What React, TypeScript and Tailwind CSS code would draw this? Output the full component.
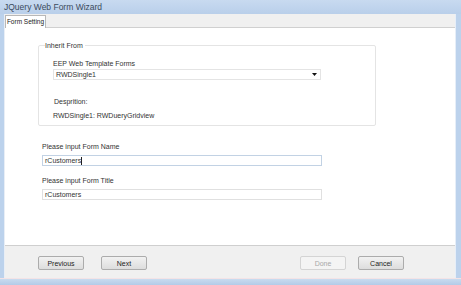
import React from "react";

const font = { fontFamily: '"Liberation Sans", Arial, sans-serif' };

function WinButton({ label, disabled }: { label: string; disabled?: boolean }) {
    return (
        <button
            className={`w-[46px] h-[14px] rounded-[2px] border text-[7px] leading-none flex items-center justify-center ${
                disabled
                    ? "border-[#d4d4d4] bg-[#f4f4f4] text-[#a8a8a8]"
                    : "border-[#acacac] bg-gradient-to-b from-[#f2f2f2] to-[#dddddd] text-[#222]"
            }`}
        >
            {label}
        </button>
    );
}

export default function App() {
    return (
        <div className="w-[461px] h-[285px] flex flex-col bg-[#c4d7ee] overflow-hidden" style={font}>
            {/* title bar */}
            <div className="h-[14px] flex items-center pl-[4px] bg-gradient-to-b from-[#c8daf0] to-[#b9cfea] text-[8.5px] text-[#3b4a5c]">
                JQuery Web Form Wizard
            </div>

            <div className="flex flex-1">
                <div className="w-[4px] bg-[#bcd2ec]" />
                <div className="flex-1 flex flex-col bg-[#f0f0f0] border-l border-[#e8eef6]">
                    {/* tab strip */}
                    <div className="h-[14px] flex items-end border-b border-[#d0d0d0]">
                        <div className="h-[13px] w-[41px] bg-white border border-b-0 border-[#b8b8b8] text-[6.5px] whitespace-nowrap text-[#222] flex items-center justify-center -mb-px">
                            Form Setting
                        </div>
                    </div>

                    {/* content */}
                    <div className="h-[218px] bg-white border-b border-[#cfcfcf] text-[7px] text-[#333] pl-[33px] pt-[17px]">
                        <div className="relative w-[338px] h-[81px] border border-[#e4e4e4] rounded-[2px]">
                            <span className="absolute -top-[5px] left-[6px] bg-white pr-[2px] leading-[9px]">Inherit From</span>
                            <div className="pl-[14px] pt-[13px]">
                                <div className="leading-[9px]">EEP Web Template Forms</div>
                                <div className="mt-[1px] w-[268px] h-[11px] border border-[#e4e4e4] flex items-center justify-between pl-[2px] pr-[3px]">
                                    <span className="leading-none">RWDSingle1</span>
                                    <svg width="5" height="3" viewBox="0 0 5 3"><path d="M0 0h5L2.5 3z" fill="#111" /></svg>
                                </div>
                                <div className="mt-[17px] pl-[1px] leading-[9px]">Desprition:</div>
                                <div className="mt-[5px] leading-[9px]">RWDSingle1: RWDueryGridview</div>
                            </div>
                        </div>

                        <div className="mt-[16px] pl-[4px] leading-[9px]">Please input Form Name</div>
                        <div className="mt-[4px] ml-[4px] w-[280px] h-[11px] border border-[#c2d2e4] flex items-center pl-[2px] leading-none">
                            rCustomers<span className="w-px h-[8px] bg-[#222]" />
                        </div>
                        <div className="mt-[10px] pl-[4px] leading-[9px]">Please input Form Title</div>
                        <div className="mt-[4px] ml-[4px] w-[280px] h-[11px] border border-[#e0e0e0] flex items-center pl-[2px] leading-none">
                            rCustomers
                        </div>
                    </div>

                    {/* buttons */}
                    <div className="flex-1 flex items-start pt-[10px] pl-[33px]">
                        <WinButton label="Previous" />
                        <div className="ml-[17px]">
                            <WinButton label="Next" />
                        </div>
                        <div className="ml-[153px]">
                            <WinButton label="Done" disabled />
                        </div>
                        <div className="ml-[12px]">
                            <WinButton label="Cancel" />
                        </div>
                    </div>
                </div>
                <div className="w-[6px] bg-[#bcd2ec] border-l border-[#e6eef8]" />
            </div>
            <div className="h-[7px] bg-gradient-to-b from-[#c9dbef] to-[#b3cbe8] border-t border-[#f3e3e6]" />
        </div>
    );
}
